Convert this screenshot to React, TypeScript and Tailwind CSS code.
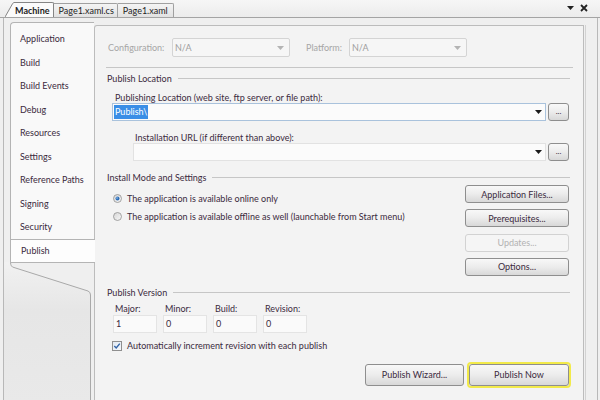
import React from "react";

const TXT = "text-[#3b2a3d]";

function Arrow({ disabled }: { disabled?: boolean }) {
  return (
    <svg width="7" height="4" viewBox="0 0 7 4" className="shrink-0">
      <path d="M0 0 L7 0 L3.5 4 Z" fill={disabled ? "#b4b4b4" : "#1a1a1a"} />
    </svg>
  );
}

function Btn({
  children,
  className = "",
  disabled,
}: {
  children: React.ReactNode;
  className?: string;
  disabled?: boolean;
}) {
  return (
    <div
      className={`flex items-center justify-center rounded-[3px] border ${
        disabled
          ? "border-[#d2d2d2] bg-[#f5f5f5] text-[#b2b2b2]"
          : `border-[#8e8e8e] bg-gradient-to-b from-[#f8f8f8] via-[#ececec] to-[#d8d8d8] ${TXT}`
      } ${className}`}
    >
      {children}
    </div>
  );
}

function SectionHeader({ title }: { title: string }) {
  return (
    <div className="flex items-center h-[12px]">
      <span className={`${TXT} whitespace-nowrap`}>{title}</span>
      <div className="flex-1 ml-[6px] border-t border-[#c6c6c6]" />
    </div>
  );
}

function Radio({ checked }: { checked?: boolean }) {
  return (
    <svg width="9" height="9" viewBox="0 0 9 9" className="shrink-0">
      <defs>
        <linearGradient id={checked ? "rg1" : "rg2"} x1="0" y1="0" x2="1" y2="1">
          <stop offset="0" stopColor="#d6d6d6" />
          <stop offset="1" stopColor="#f8f8f8" />
        </linearGradient>
      </defs>
      <circle cx="4.5" cy="4.5" r="4" fill={`url(#${checked ? "rg1" : "rg2"})`} stroke="#8f8f8f" strokeWidth="0.8" />
      {checked && <circle cx="4.5" cy="4.5" r="2" fill="#2f6fb8" />}
      {checked && <circle cx="4" cy="4" r="0.8" fill="#9cc6ef" />}
    </svg>
  );
}

function Sidebar() {
  const items = [
    "Application",
    "Build",
    "Build Events",
    "Debug",
    "Resources",
    "Settings",
    "Reference Paths",
    "Signing",
    "Security",
  ];
  return (
    <div className="w-[90px] shrink-0 flex flex-col pt-[4px]">
      <div className="ml-[6px] w-[85px] relative z-10 flex flex-col">
        <div className="border-l border-t border-[#b4b4b4] rounded-tl-[4px] bg-[#f9f9f9] pt-[4px] mr-[1px]">
          {items.map((it) => (
            <div key={it} className={`h-[23.5px] flex items-center pl-[9px] ${TXT}`}>
              {it}
            </div>
          ))}
        </div>
        <div className={`h-[24px] flex items-center pl-[10px] bg-[#fdfdfd] border-t border-b border-l border-[#b4b4b4] ${TXT}`}>
          Publish
        </div>
      </div>
      <div className="flex-1 -mt-[1px] relative">
        <svg width="90" height="140" viewBox="0 0 90 140" className="block">
          <defs>
            <linearGradient id="sbg" x1="0" y1="0" x2="0" y2="1">
              <stop offset="0" stopColor="#f1f1f1" />
              <stop offset="0.35" stopColor="#e6e6e6" />
              <stop offset="1" stopColor="#e9e9e9" />
            </linearGradient>
          </defs>
          <path d="M0 0 L6.5 0 Q6.5 5 10 5.5 L84 29 Q86.5 30 86.5 33 L86.5 140 L0 140 Z" fill="url(#sbg)" />
          <path d="M6.5 0 Q6.5 5 10 5.5 L84 29 Q86.5 30 86.5 33 L86.5 140" fill="none" stroke="#a9a9a9" strokeWidth="1" />
        </svg>
      </div>
    </div>
  );
}

function TabStrip() {
  return (
    <div className="h-[18px] border-b border-[#a4a4a4] bg-gradient-to-b from-[#f6f6f6] to-[#ececec] flex items-end justify-between">
      <div className="flex items-end pl-[5px] h-full">
        <svg width="9" height="15" viewBox="0 0 9 15" className="block shrink-0">
          <path d="M0 15 L7.5 1.8 Q8.3 0.5 9 0.5 L9 15 Z" fill="#fbfbfb" />
          <path d="M0 15 L7.5 1.8 Q8.3 0.5 9 0.5" fill="none" stroke="#858585" strokeWidth="1" />
        </svg>
        <div className="h-[15px] border-t border-r border-[#858585] rounded-tr-[2px] bg-[#fbfbfb] flex items-center pl-[1px] pr-[3px] font-bold text-[9px] text-[#1e1e1e]">
          Machine
        </div>
        <div className="h-[14px] border-t border-r border-[#a0a0a0] rounded-tr-[2px] bg-gradient-to-b from-[#f4f4f4] to-[#e2e2e2] flex items-center pl-[5px] pr-[3px] text-[9px] text-[#1e1e1e]">
          Page1.xaml.cs
        </div>
        <div className="h-[14px] border-t border-r border-[#a0a0a0] rounded-tr-[2px] bg-gradient-to-b from-[#f4f4f4] to-[#e2e2e2] flex items-center pl-[5px] pr-[5px] text-[9px] text-[#1e1e1e]">
          Page1.xaml
        </div>
      </div>
      <div className="flex items-center gap-[6px] pr-[12px] h-full pb-[1px]">
        <svg width="7" height="4" viewBox="0 0 7 4">
          <path d="M0 0 L7 0 L3.5 4 Z" fill="#222" />
        </svg>
        <svg width="8" height="8" viewBox="0 0 8 8">
          <path d="M1 1 L7 7 M7 1 L1 7" stroke="#222" strokeWidth="1.8" />
        </svg>
      </div>
    </div>
  );
}

function Content() {
  return (
    <div className="w-[492px] shrink-0 pt-[7px] flex">
      <div className="border-r border-[#d2d2d2] pr-[1px] flex-1 flex">
        <div className="w-[490px] border-t border-l border-r border-[#bcbcbc] rounded-tl-[3px] bg-[#f3f3f3] flex flex-col">
          {/* Configuration row */}
          <div className="flex items-center pt-[12px] pl-[13px]">
            <span className="w-[64px] text-[#a6a6a6]">Configuration:</span>
            <div className="w-[118px] h-[19px] border border-[#d4d4d4] rounded-[2px] bg-[#f6f6f6] flex items-center justify-between pl-[2px] pr-[5px] text-[#9e9e9e]">
              <span>N/A</span>
              <Arrow disabled />
            </div>
            <span className="ml-[16px] w-[43px] text-[#a6a6a6]">Platform:</span>
            <div className="w-[118px] h-[19px] border border-[#d4d4d4] rounded-[2px] bg-[#f6f6f6] flex items-center justify-between pl-[2px] pr-[5px] text-[#9e9e9e]">
              <span>N/A</span>
              <Arrow disabled />
            </div>
          </div>
          <div className="mt-[10px] ml-[11px] mr-[10px] border-t border-[#c6c6c6]" />

          <div className="pl-[12px] pr-[13px] flex flex-col">
            <div className="mt-[4px]">
              <SectionHeader title="Publish Location" />
            </div>
            <div className={`mt-[7px] h-[12px] flex items-center pl-[8px] ${TXT}`}>
              Publishing Location (web site, ftp server, or file path):
            </div>
            <div className="flex items-center h-[18px]">
              <div className="ml-[5px] flex-1 h-[18px] border border-[#a9c2dc] bg-[#fbfbfb] flex items-center justify-between pl-[1px] pr-[3px]">
                <span className="bg-[#3a8ee6] text-white px-[1px] leading-[14px]">Publish\</span>
                <Arrow />
              </div>
              <Btn className="ml-[2px] mr-[1px] w-[21px] h-[18px] text-[8px] leading-none pb-[2px]">...</Btn>
            </div>
            <div className={`mt-[10px] h-[12px] flex items-center pl-[28px] ${TXT}`}>
              Installation URL (if different than above):
            </div>
            <div className="flex items-center h-[18px]">
              <div className="ml-[26px] flex-1 h-[18px] border border-[#e2e2e2] bg-[#fbfbfb] flex items-center justify-end pr-[3px]">
                <Arrow />
              </div>
              <Btn className="ml-[2px] mr-[1px] w-[21px] h-[18px] text-[8px] leading-none pb-[2px]">...</Btn>
            </div>

            <div className="mt-[10px]">
              <SectionHeader title="Install Mode and Settings" />
            </div>
            <div className="mt-[2px] flex">
              <div className="flex-1 flex flex-col pt-[4px]">
                <div className="h-[18px] flex items-center pl-[6px] gap-[5px]">
                  <Radio checked />
                  <span className={TXT}>The application is available online only</span>
                </div>
                <div className="h-[18px] flex items-center pl-[6px] gap-[5px]">
                  <Radio />
                  <span className={TXT}>The application is available offline as well (launchable from Start menu)</span>
                </div>
              </div>
              <div className="w-[104px] mr-[1px] flex flex-col gap-[6.33px]">
                <Btn className="h-[18px]">Application Files...</Btn>
                <Btn className="h-[18px]">Prerequisites...</Btn>
                <Btn className="h-[18px]" disabled>
                  Updates...
                </Btn>
                <Btn className="h-[18px]">Options...</Btn>
              </div>
            </div>

            <div className="mt-[11px]">
              <SectionHeader title="Publish Version" />
            </div>
            <div className="mt-[4px] flex gap-[6px] pl-[6px]">
              {[
                ["Major:", "1"],
                ["Minor:", "0"],
                ["Build:", "0"],
                ["Revision:", "0"],
              ].map(([l, v]) => (
                <div key={l} className="w-[44px] flex flex-col">
                  <div className={`h-[12px] flex items-center pl-[2px] ${TXT}`}>{l}</div>
                  <div className={`h-[18px] border border-[#e4e4e4] bg-[#fafafa] flex items-center pl-[2px] ${TXT}`}>{v}</div>
                </div>
              ))}
            </div>
            <div className="mt-[7px] h-[12px] flex items-center pl-[5px] gap-[5px]">
              <svg width="10" height="10" viewBox="0 0 10 10" className="shrink-0">
                <defs>
                  <linearGradient id="cbg" x1="0" y1="0" x2="1" y2="1">
                    <stop offset="0" stopColor="#dfe8f2" />
                    <stop offset="1" stopColor="#f6f8fb" />
                  </linearGradient>
                </defs>
                <rect x="0.5" y="0.5" width="9" height="9" fill="url(#cbg)" stroke="#8f8f8f" />
                <path d="M2.3 5 L4.2 7 L7.8 2.6" fill="none" stroke="#3264a8" strokeWidth="1.4" />
              </svg>
              <span className={TXT}>Automatically increment revision with each publish</span>
            </div>

            <div className="mt-[10px] flex items-center justify-end h-[26px] -mr-[1px]">
              <Btn className="w-[99px] h-[22px]">Publish Wizard...</Btn>
              <div className="ml-[3px] w-[104px] h-[26px] rounded-[4px] border-2 border-[#f2ea4a] flex">
                <Btn className="flex-1 m-[0px]">Publish Now</Btn>
              </div>
            </div>
          </div>
        </div>
      </div>
    </div>
  );
}

export default function App() {
  return (
    <div
      className="w-[600px] h-[400px] overflow-hidden bg-[#efefef] text-[9px] leading-none"
      style={{ fontFamily: "Lato, 'Noto Sans', sans-serif" }}
    >
      <TabStrip />
      <div className="h-[382px] ml-[3px] mr-[2px] border-l border-r border-[#b8b8b8] flex">
        <Sidebar />
        <Content />
        <div className="flex-1" />
      </div>
    </div>
  );
}
